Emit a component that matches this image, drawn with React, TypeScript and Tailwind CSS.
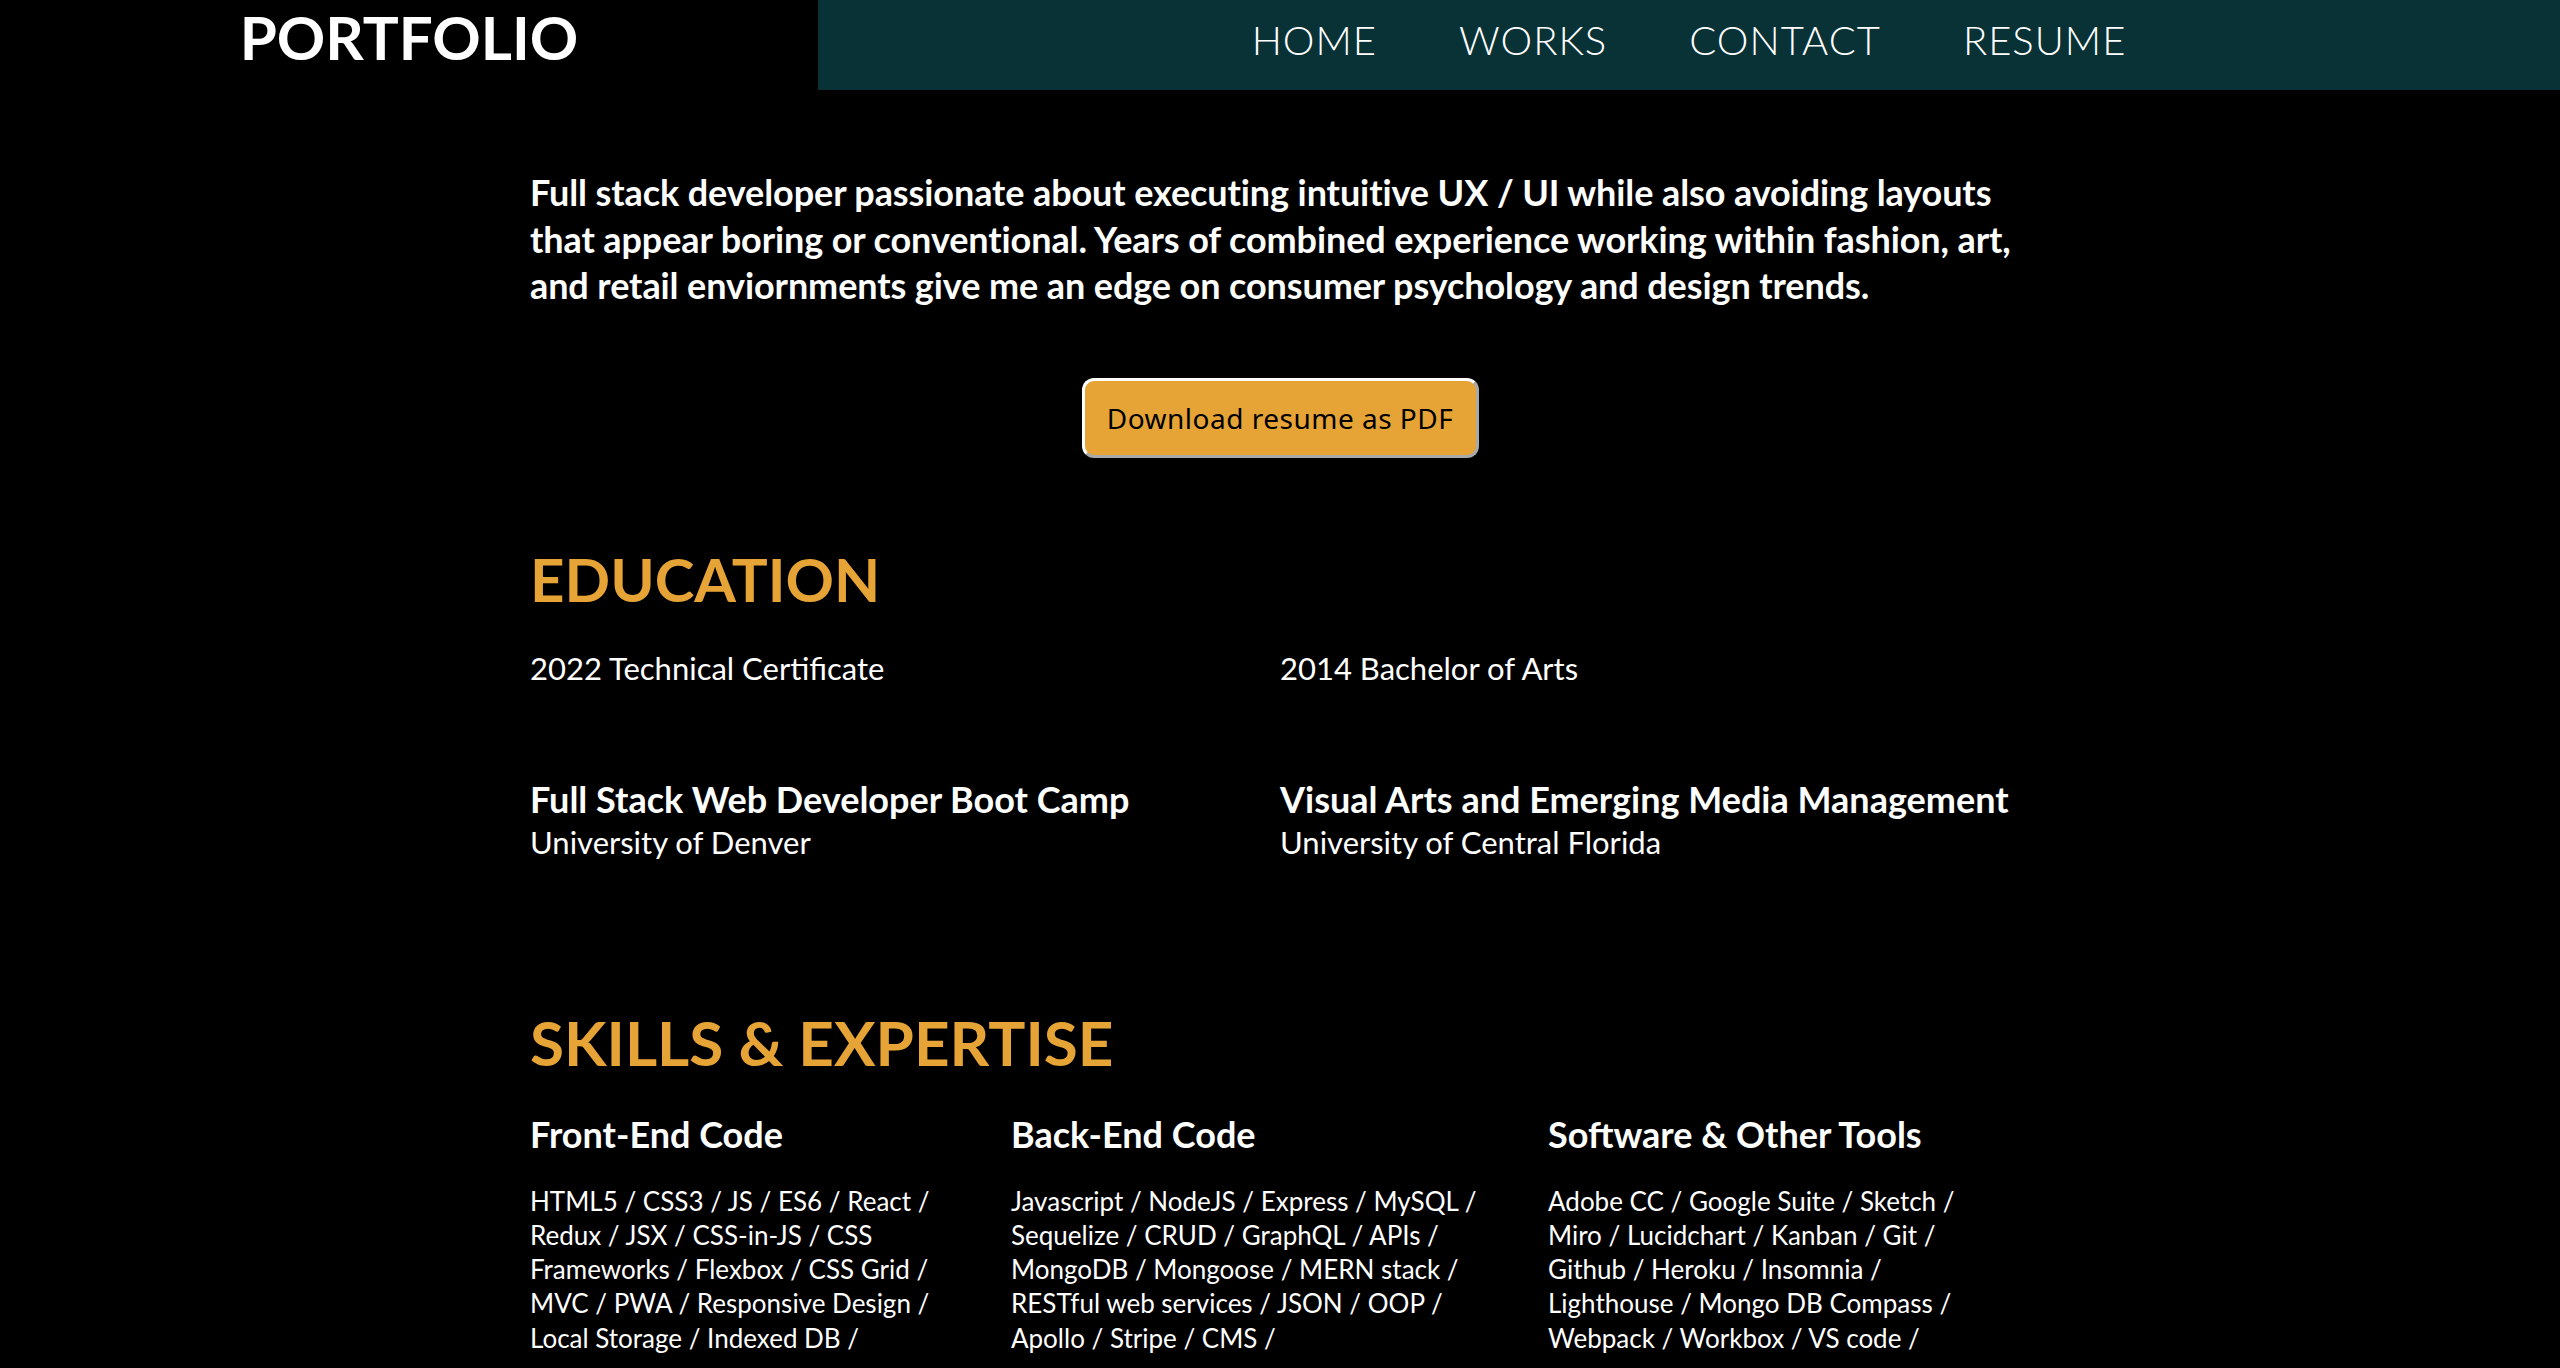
import React from "react";

const navLinks = ["HOME", "WORKS", "CONTACT", "RESUME"];

const intro = [
  "Full stack developer passionate about executing intuitive UX / UI while also avoiding layouts",
  "that appear boring or conventional. Years of combined experience working within fashion, art,",
  "and retail enviornments give me an edge on consumer psychology and design trends.",
];

const education = [
  {
    year: "2022 Technical Certificate",
    program: "Full Stack Web Developer Boot Camp",
    school: "University of Denver",
  },
  {
    year: "2014 Bachelor of Arts",
    program: "Visual Arts and Emerging Media Management",
    school: "University of Central Florida",
  },
];

const skills = [
  {
    title: "Front-End Code",
    width: "w-[481px]",
    lines: [
      "HTML5 / CSS3 / JS / ES6 / React /",
      "Redux / JSX / CSS-in-JS / CSS",
      "Frameworks / Flexbox / CSS Grid /",
      "MVC / PWA / Responsive Design /",
      "Local Storage / Indexed DB /",
    ],
  },
  {
    title: "Back-End Code",
    width: "w-[537px]",
    lines: [
      "Javascript / NodeJS / Express / MySQL /",
      "Sequelize / CRUD / GraphQL / APIs /",
      "MongoDB / Mongoose / MERN stack /",
      "RESTful web services / JSON / OOP /",
      "Apollo / Stripe / CMS /",
    ],
  },
  {
    title: "Software & Other Tools",
    width: "flex-1",
    lines: [
      "Adobe CC / Google Suite / Sketch /",
      "Miro / Lucidchart / Kanban / Git /",
      "Github / Heroku / Insomnia /",
      "Lighthouse / Mongo DB Compass /",
      "Webpack / Workbox / VS code /",
    ],
  },
];

export default function App() {
  return (
    <div className="min-h-screen w-full bg-black text-white font-['Lato',sans-serif]">
      {/* Header */}
      <header className="flex h-[90px] w-full">
        <div className="flex w-[818px] items-center justify-center pb-[16px]">
          <h1 className="text-[60px] font-bold leading-none">PORTFOLIO</h1>
        </div>
        <nav className="flex flex-1 items-center justify-center gap-[82px] bg-[#093236] pb-[10px]">
          {navLinks.map((link) => (
            <a key={link} href="#" className="text-[40px] font-light leading-none tracking-[1px]">
              {link}
            </a>
          ))}
        </nav>
      </header>

      <main className="mx-auto w-[1500px] pt-[79px] pb-10">
        {/* Intro */}
        <p className="text-[36px] font-bold leading-[46.5px] tracking-[-0.1px]">
          {intro.map((line) => (
            <span key={line} className="block whitespace-nowrap">
              {line}
            </span>
          ))}
        </p>

        <div className="mt-[69px] flex justify-center">
          <button className="h-[80px] w-[397px] rounded-[12px] border-[3px] border-t-white border-l-white border-r-[#a9a9a9] border-b-[#a9a9a9] bg-[#e5a435] font-['Noto_Sans',sans-serif] text-[28px] tracking-[0.5px] text-black">
            Download resume as PDF
          </button>
        </div>

        {/* Education */}
        <h2 className="mt-[89px] text-[60px] font-bold leading-[64px] text-[#e5a435]">EDUCATION</h2>
        <div className="mt-[39px] grid grid-cols-2">
          {education.map((item) => (
            <div key={item.year}>
              <p className="text-[31px] font-normal leading-[36px]">{item.year}</p>
              <h3 className="mt-[92px] text-[36px] font-bold leading-[42px]">{item.program}</h3>
              <p className="mt-[4px] text-[31px] leading-[36px]">{item.school}</p>
            </div>
          ))}
        </div>

        {/* Skills */}
        <h2 className="mt-[150px] text-[62px] font-bold leading-[64px] text-[#e5a435]">
          SKILLS &amp; EXPERTISE
        </h2>
        <div className="mt-[39px] flex">
          {skills.map((col) => (
            <div key={col.title} className={col.width}>
              <h3 className="text-[36px] font-bold leading-[42px]">{col.title}</h3>
              <p className="mt-[29px] text-[26px] leading-[34.3px]">
                {col.lines.map((line) => (
                  <span key={line} className="block whitespace-nowrap">
                    {line}
                  </span>
                ))}
              </p>
            </div>
          ))}
        </div>
      </main>
    </div>
  );
}
